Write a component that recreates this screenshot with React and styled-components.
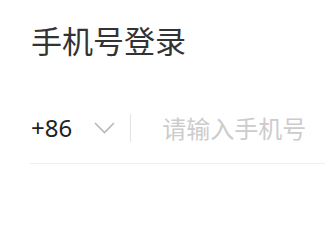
import React from 'react';
import styled, { createGlobalStyle } from 'styled-components';

const GlobalStyle = createGlobalStyle`
  html, body {
    margin: 0;
    padding: 0;
    background: #fff;
  }
  body {
    font-family: "Noto Sans", "Noto Sans CJK SC", sans-serif;
  }
`;

const Page = styled.div`
  padding: 0 1px 0 30px;
`;

const Title = styled.h1`
  margin: 0;
  padding-top: 22px;
  padding-left: 1px;
  font-size: 31px;
  line-height: 36px;
  font-weight: 400;
  color: #333;
  font-family: "Noto Sans CJK SC", sans-serif;
`;

const PhoneRow = styled.div`
  display: flex;
  align-items: center;
  margin-top: 52px;
  padding-bottom: 18px;
  border-bottom: 1px solid #eeeeee;
`;

const AreaCode = styled.button`
  display: flex;
  align-items: center;
  height: 30px;
  padding: 0 0 0 1px;
  border: none;
  background: transparent;
  font-family: "Noto Sans", sans-serif;
  font-size: 24px;
  color: #222;
  cursor: pointer;
`;

const Chevron = styled.svg`
  margin-left: 22px;
  width: 21px;
  height: 12px;
`;

const Divider = styled.span`
  width: 1px;
  height: 28px;
  margin-left: 15px;
  background: #e2e2e2;
`;

const PhoneInput = styled.input`
  flex: 1;
  min-width: 0;
  margin-left: 31px;
  padding: 0;
  border: none;
  outline: none;
  background: transparent;
  font-family: "Noto Sans CJK SC", sans-serif;
  font-size: 24px;
  color: #222;

  &::placeholder {
    color: #cccccc;
  }
`;

const App = () => (
  <Page>
    <GlobalStyle />
    <Title>手机号登录</Title>
    <PhoneRow>
      <AreaCode type="button">
        +86
        <Chevron viewBox="0 0 21 12" fill="none">
          <path d="M1 1 L10.5 10.5 L20 1" stroke="#b8b8b8" strokeWidth="1.6" />
        </Chevron>
      </AreaCode>
      <Divider />
      <PhoneInput placeholder="请输入手机号" />
    </PhoneRow>
  </Page>
);

export default App;
